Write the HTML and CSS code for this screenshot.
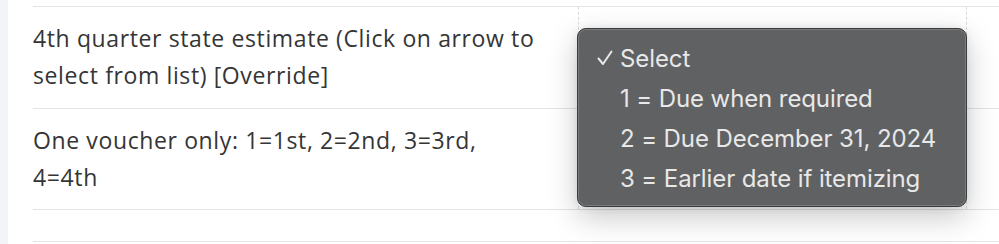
FILE: index.html
```html
<!DOCTYPE html>
<html lang="en">
<head>
<meta charset="utf-8">
<title>State estimate</title>
<link rel="stylesheet" href="styles.css">
</head>
<body>
<div class="page">
  <aside class="rail"></aside>
  <main class="sheet">
    <div class="row">
      <div class="cell label"><span class="text">4th quarter state estimate (Click on arrow to<br>select from list) [Override]</span></div>
      <div class="cell value"></div>
      <div class="cell extra"></div>
    </div>
    <div class="row">
      <div class="cell label"><span class="text">One voucher only: 1=1st, 2=2nd, 3=3rd,<br>4=4th</span></div>
      <div class="cell value"></div>
      <div class="cell extra"></div>
    </div>
    <div class="row short">
      <div class="cell label"></div>
      <div class="cell value blank"></div>
      <div class="cell extra blank"></div>
    </div>
    <div class="row end"></div>
  </main>
</div>
<ul class="menu">
  <li class="item checked"><svg class="check" width="16" height="16" viewBox="0 0 16 16"><polyline points="1.5,8.5 6,14 14.5,1.5" fill="none" stroke="currentColor" stroke-width="2" stroke-linecap="round" stroke-linejoin="round"/></svg>Select</li>
  <li class="item">1 = Due when required</li>
  <li class="item">2 = Due December 31, 2024</li>
  <li class="item">3 = Earlier date if itemizing</li>
</ul>
</body>
</html>
```

FILE: styles.css
```css
html, body {
  margin: 0;
  padding: 0;
  background: #ffffff;
}
body {
  width: 999px;
  height: 244px;
  overflow: hidden;
  position: relative;
  font-family: "Open Sans", "Lato", sans-serif;
  color: #353535;
}
.page {
  display: flex;
  height: 244px;
}
.rail {
  width: 8px;
  flex: 0 0 8px;
  background: #f3f4f8;
}
.sheet {
  flex: 1;
  padding: 6px 0 0 25px;
  display: flex;
  flex-direction: column;
  min-width: 0;
}
.row {
  display: flex;
  border-top: 1px solid #e4e4e4;
  height: 101px;
}
.row.short {
  height: 31px;
}
.row.end {
  height: 2px;
}
.cell {
  box-sizing: border-box;
}
.label {
  width: 545px;
  flex: 0 0 545px;
  padding: 0 8px 0 0;
  font-size: 23px;
  line-height: 37px;
  letter-spacing: 0.62px;
  white-space: nowrap;
  display: flex;
  align-items: center;
}
.label:empty {
  display: block;
}
.value {
  width: 389px;
  flex: 0 0 389px;
  border-left: 1px dashed #dcdcdc;
  border-right: 1px dashed #dcdcdc;
}
.value.blank,
.extra.blank {
  border-color: transparent;
}
.extra {
  flex: 1;
}
.menu {
  position: absolute;
  left: 577px;
  top: 28px;
  width: 390px;
  height: 179px;
  box-sizing: border-box;
  margin: 0;
  padding: 9px 0 0 0;
  list-style: none;
  background: #606162;
  border: 1px solid #3a3b3c;
  border-radius: 9px;
  box-shadow: inset 0 0 0 1px #7b7c7d, 0 10px 30px rgba(0, 0, 0, 0.22), 0 0 8px rgba(0, 0, 0, 0.08);
  font-family: "Inter", "Liberation Sans", sans-serif;
  font-size: 24px;
  letter-spacing: -0.1px;
  color: #e8e8e8;
}
.item {
  display: flex;
  align-items: center;
  height: 40px;
  padding-left: 42px;
  white-space: nowrap;
}
.item.checked {
  padding-left: 19px;
}
.check {
  margin-right: 7px;
  color: #e8e8e8;
}
```
